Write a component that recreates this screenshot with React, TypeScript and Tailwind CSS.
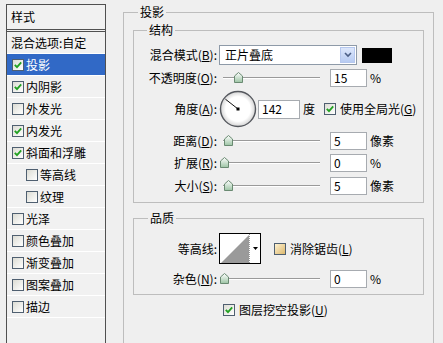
import React from 'react'

const styleItems = [
  { label: '混合选项:自定', check: null as boolean | null },
  { label: '投影', check: true, selected: true },
  { label: '内阴影', check: true },
  { label: '外发光', check: false },
  { label: '内发光', check: true },
  { label: '斜面和浮雕', check: true },
  { label: '等高线', check: false, indent: true },
  { label: '纹理', check: false, indent: true },
  { label: '光泽', check: false },
  { label: '颜色叠加', check: false },
  { label: '渐变叠加', check: false },
  { label: '图案叠加', check: false },
  { label: '描边', check: false },
]

function Check({ on, warm }: { on: boolean; warm?: boolean }) {
  return (
    <span
      className={`flex h-[12px] w-[12px] shrink-0 items-center justify-center border border-[#4f5f70] ${
        warm ? 'bg-linear-to-br from-[#fff3d2] to-[#dcb86c]' : 'bg-linear-to-br from-[#dcdcd4] to-white'
      }`}
    >
      {on && (
        <svg width="8" height="8" viewBox="0 0 8 8">
          <path d="M0.8 3.8 L3 6.2 L7.2 1.4" fill="none" stroke="#21a121" strokeWidth="1.8" />
        </svg>
      )}
    </span>
  )
}

function Thumb() {
  return (
    <svg width="9" height="11" viewBox="0 0 9 11">
      <defs>
        <linearGradient id="th" x1="0" y1="0" x2="0" y2="1">
          <stop offset="0" stopColor="#ffffff" />
          <stop offset="1" stopColor="#9cc4a4" />
        </linearGradient>
      </defs>
      <path d="M0.5 4 L4.5 0.5 L8.5 4 L8.5 10.5 L0.5 10.5 Z" fill="url(#th)" stroke="#6a8a72" />
    </svg>
  )
}

function Slider({ pos }: { pos: number }) {
  return (
    <div className="relative h-[18px] w-[111px] shrink-0">
      <div className="absolute left-[4px] top-[8px] h-px w-[97px] bg-[#9a9a9a]" />
      <div className="absolute left-[4px] top-[9px] h-px w-[97px] bg-white" />
      <div className="absolute top-[3px]" style={{ left: pos - 4 }}>
        <Thumb />
      </div>
    </div>
  )
}

function NumBox({ value, w = 'w-[37px]', h = 'h-[18px]' }: { value: string; w?: string; h?: string }) {
  return (
    <div className={`flex ${w} ${h} shrink-0 items-center border border-[#a7abb0] bg-white pl-[3px] leading-none`}>
      {value}
    </div>
  )
}

function Label({ children }: { children: React.ReactNode }) {
  return <div className="w-[83px] shrink-0 text-right">{children}</div>
}

function SliderRow({
  label,
  pos,
  value,
  unit,
  className,
}: {
  label: React.ReactNode
  pos: number
  value: string
  unit: string
  className: string
}) {
  return (
    <div className={`flex h-[18px] items-center ${className}`}>
      <Label>{label}</Label>
      <div className="ml-[2px] flex items-center">
        <Slider pos={pos} />
        <NumBox value={value} />
        <span className="ml-[3px]">{unit}</span>
      </div>
    </div>
  )
}

function Dial() {
  const a = (142 * Math.PI) / 180
  const x2 = 19 + Math.cos(a) * 16
  const y2 = 19 - Math.sin(a) * 16
  return (
    <svg width="38" height="38" viewBox="0 0 38 38" className="shrink-0">
      <defs>
        <radialGradient id="dl" cx="0.5" cy="0.5" r="0.5">
          <stop offset="0.7" stopColor="#ffffff" />
          <stop offset="1" stopColor="#d4d4d4" />
        </radialGradient>
      </defs>
      <circle cx="19" cy="19" r="17.5" fill="url(#dl)" stroke="#55585e" strokeWidth="1.4" />
      <line x1="19" y1="19" x2={x2} y2={y2} stroke="#111" strokeWidth="1" />
      <rect x="17.5" y="17.5" width="3" height="3" fill="#000" />
    </svg>
  )
}

export default function App() {
  return (
    <div className="flex h-[343px] w-[443px] overflow-hidden bg-[#efefef] font-['Noto_Sans_CJK_SC','Noto_Sans',sans-serif] text-[12px] leading-[14px] text-black">
      {/* Styles list */}
      <div className="ml-[6px] mt-[4px] flex h-[345px] w-[100px] shrink-0 flex-col border border-[#505050] bg-[#f1f1f1]">
        <div className="flex h-[27px] shrink-0 items-center border-b-[3px] border-double border-[#505050] pl-[4px]">
          样式
        </div>
        {styleItems.map((item) => (
          <div
            key={item.label}
            className={`flex h-[22px] shrink-0 items-center border-b border-white ${
              item.selected ? 'bg-[#3169c6] text-white' : ''
            } ${item.check === null ? 'pl-[4px]' : item.indent ? 'pl-[19px]' : 'pl-[5px]'}`}
          >
            {item.check !== null && <Check on={item.check} />}
            <span className={item.check !== null ? 'ml-[2px]' : ''}>{item.label}</span>
          </div>
        ))}
      </div>

      {/* Drop shadow settings */}
      <fieldset className="ml-[17px] mt-[5px] h-[360px] w-[311px] shrink-0 border border-[#bdbdbd] p-0">
        <legend className="ml-[14px] px-[2px] leading-[14px]">投影</legend>
        <div className="px-[9px] pt-[4px]">
          <fieldset className="border border-[#bdbdbd] p-0">
            <legend className="ml-[13px] px-[2px] leading-[14px]">结构</legend>
            <div className="pb-[7px] pt-[8px]">
              <div className="flex h-[20px] items-center">
                <Label>
                  混合模式(<u>B</u>):
                </Label>
                <div className="ml-[2px] flex h-[20px] w-[138px] shrink-0 items-center border border-[#8e9aa8] bg-white">
                  <span className="flex-1 pl-[5px]">正片叠底</span>
                  <span className="mr-px flex h-[16px] w-[15px] items-center justify-center border border-[#b5c7ee] bg-linear-to-b from-[#dde7fb] to-[#b7cbf2]">
                    <svg width="8" height="6" viewBox="0 0 8 6">
                      <path d="M1 1 L4 4 L7 1" fill="none" stroke="#4c5f86" strokeWidth="1.6" />
                    </svg>
                  </span>
                </div>
                <div className="ml-[5px] h-[15px] w-[30px] shrink-0 bg-black" />
              </div>

              <SliderRow
                className="mt-[4px]"
                label={<>不透明度(<u>O</u>):</>}
                pos={19}
                value="15"
                unit="%"
              />

              <div className="mt-[4px] flex h-[36px] items-center">
                <Label>
                  角度(<u>A</u>):
                </Label>
                <div className="ml-[2px] flex items-center">
                  <Dial />
                  <div className="ml-px">
                    <NumBox value="142" w="w-[42px]" h="h-[19px]" />
                  </div>
                  <span className="ml-[3px]">度</span>
                  <span className="ml-[9px]">
                    <Check on />
                  </span>
                  <span className="ml-[4px]">
                    使用全局光(<u>G</u>)
                  </span>
                </div>
              </div>

              <SliderRow className="mt-[5px]" label={<>距离(<u>D</u>):</>} pos={9} value="5" unit="像素" />
              <SliderRow className="mt-[4px]" label={<>扩展(<u>R</u>):</>} pos={5} value="0" unit="%" />
              <SliderRow className="mt-[5px]" label={<>大小(<u>S</u>):</>} pos={9} value="5" unit="像素" />
            </div>
          </fieldset>

          <fieldset className="mt-[8px] border border-[#bdbdbd] p-0">
            <legend className="ml-[14px] px-[2px] leading-[14px]">品质</legend>
            <div className="pb-[6px] pt-[8px]">
              <div className="flex h-[31px] items-center">
                <Label>等高线:</Label>
                <div className="ml-[2px] flex h-[31px] w-[42px] shrink-0 border border-black bg-white">
                  <svg width="29" height="29" viewBox="0 0 29 29" className="shrink-0">
                    <polygon points="1,29 29,1 29,29" fill="#9a9a9a" />
                  </svg>
                  <div className="flex flex-1 items-center justify-center border-l border-dotted border-[#9a9a9a]">
                    <svg width="5" height="3" viewBox="0 0 5 3">
                      <polygon points="0,0 5,0 2.5,3" fill="#000" />
                    </svg>
                  </div>
                </div>
                <span className="ml-[13px]">
                  <Check on={false} warm />
                </span>
                <span className="ml-[4px]">
                  消除锯齿(<u>L</u>)
                </span>
              </div>
              <SliderRow className="mt-[6px]" label={<>杂色(<u>N</u>):</>} pos={5} value="0" unit="%" />
            </div>
          </fieldset>

          <div className="mt-[8px] flex h-[13px] items-center pl-[90px]">
            <Check on />
            <span className="ml-[4px]">
              图层挖空投影(<u>U</u>)
            </span>
          </div>
        </div>
      </fieldset>
    </div>
  )
}
